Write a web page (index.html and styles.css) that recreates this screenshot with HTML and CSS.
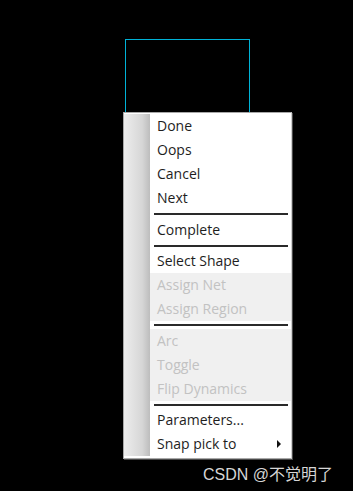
FILE: index.html
```html
<!DOCTYPE html>
<html>
<head>
<meta charset="utf-8">
<link rel="stylesheet" href="styles.css">
</head>
<body>
<div class="canvas">
  <div class="shape"></div>
  <div class="menu">
    <div class="gutter"></div>
    <ul class="items">
      <li class="item">Done</li>
      <li class="item">Oops</li>
      <li class="item">Cancel</li>
      <li class="item">Next</li>
      <li class="sep sep-a"></li>
      <li class="item">Complete</li>
      <li class="sep sep-b"></li>
      <li class="item">Select Shape</li>
      <li class="item disabled">Assign Net</li>
      <li class="item disabled">Assign Region</li>
      <li class="sep sep-a"></li>
      <li class="item disabled">Arc</li>
      <li class="item disabled">Toggle</li>
      <li class="item disabled">Flip Dynamics</li>
      <li class="sep sep-b"></li>
      <li class="item">Parameters...</li>
      <li class="item has-sub">Snap pick to<span class="arrow"></span></li>
    </ul>
  </div>
  <div class="watermark">CSDN @不觉明了</div>
</div>
</body>
</html>
```
FILE: styles.css
```css
html, body {
  margin: 0;
  padding: 0;
  background: #000;
}
.canvas {
  position: relative;
  width: 353px;
  height: 491px;
  background: #000;
  overflow: hidden;
}
.shape {
  position: absolute;
  left: 125px;
  top: 39px;
  width: 123px;
  height: 90px;
  border: 1px solid #00b2d6;
}
.menu {
  position: absolute;
  left: 123px;
  top: 112px;
  width: 169px;
  box-sizing: border-box;
  display: flex;
  background: #fff;
  border: 1px solid #a8a8a8;
  border-right-color: #cfcfcf;
  padding: 1px 0 2px;
  box-shadow: 1px 1px 0 #4a4a4a;
}
.gutter {
  width: 26px;
  flex: none;
  background: linear-gradient(to right, #ededed, #d6d6d6 70%, #bdbdbd);
}
.items {
  list-style: none;
  margin: 0;
  padding: 0;
  flex: 1;
  font-family: "Open Sans", "Noto Sans", sans-serif;
  font-size: 14px;
  color: #1e1e1e;
}
.item {
  height: 24px;
  line-height: 24px;
  padding-left: 7px;
  white-space: nowrap;
  position: relative;
}
.item.disabled {
  background: #f0f0f0;
  color: #c2c2c2;
}
.sep {
  display: flex;
  align-items: center;
  padding: 0 3px 0 4px;
}
.sep::before {
  content: "";
  flex: 1;
  height: 2px;
  background: #2a2a2a;
}
.sep-a { height: 8px; }
.sep-b { height: 7px; }
.arrow {
  position: absolute;
  right: 10px;
  top: 8px;
  width: 0;
  height: 0;
  border-top: 4px solid transparent;
  border-bottom: 4px solid transparent;
  border-left: 4px solid #111;
}
.watermark {
  position: absolute;
  left: 203px;
  top: 461px;
  font-family: "Liberation Sans", "Noto Sans CJK SC", sans-serif;
  font-size: 16px;
  color: #d6d6d6;
  white-space: nowrap;
}
```
